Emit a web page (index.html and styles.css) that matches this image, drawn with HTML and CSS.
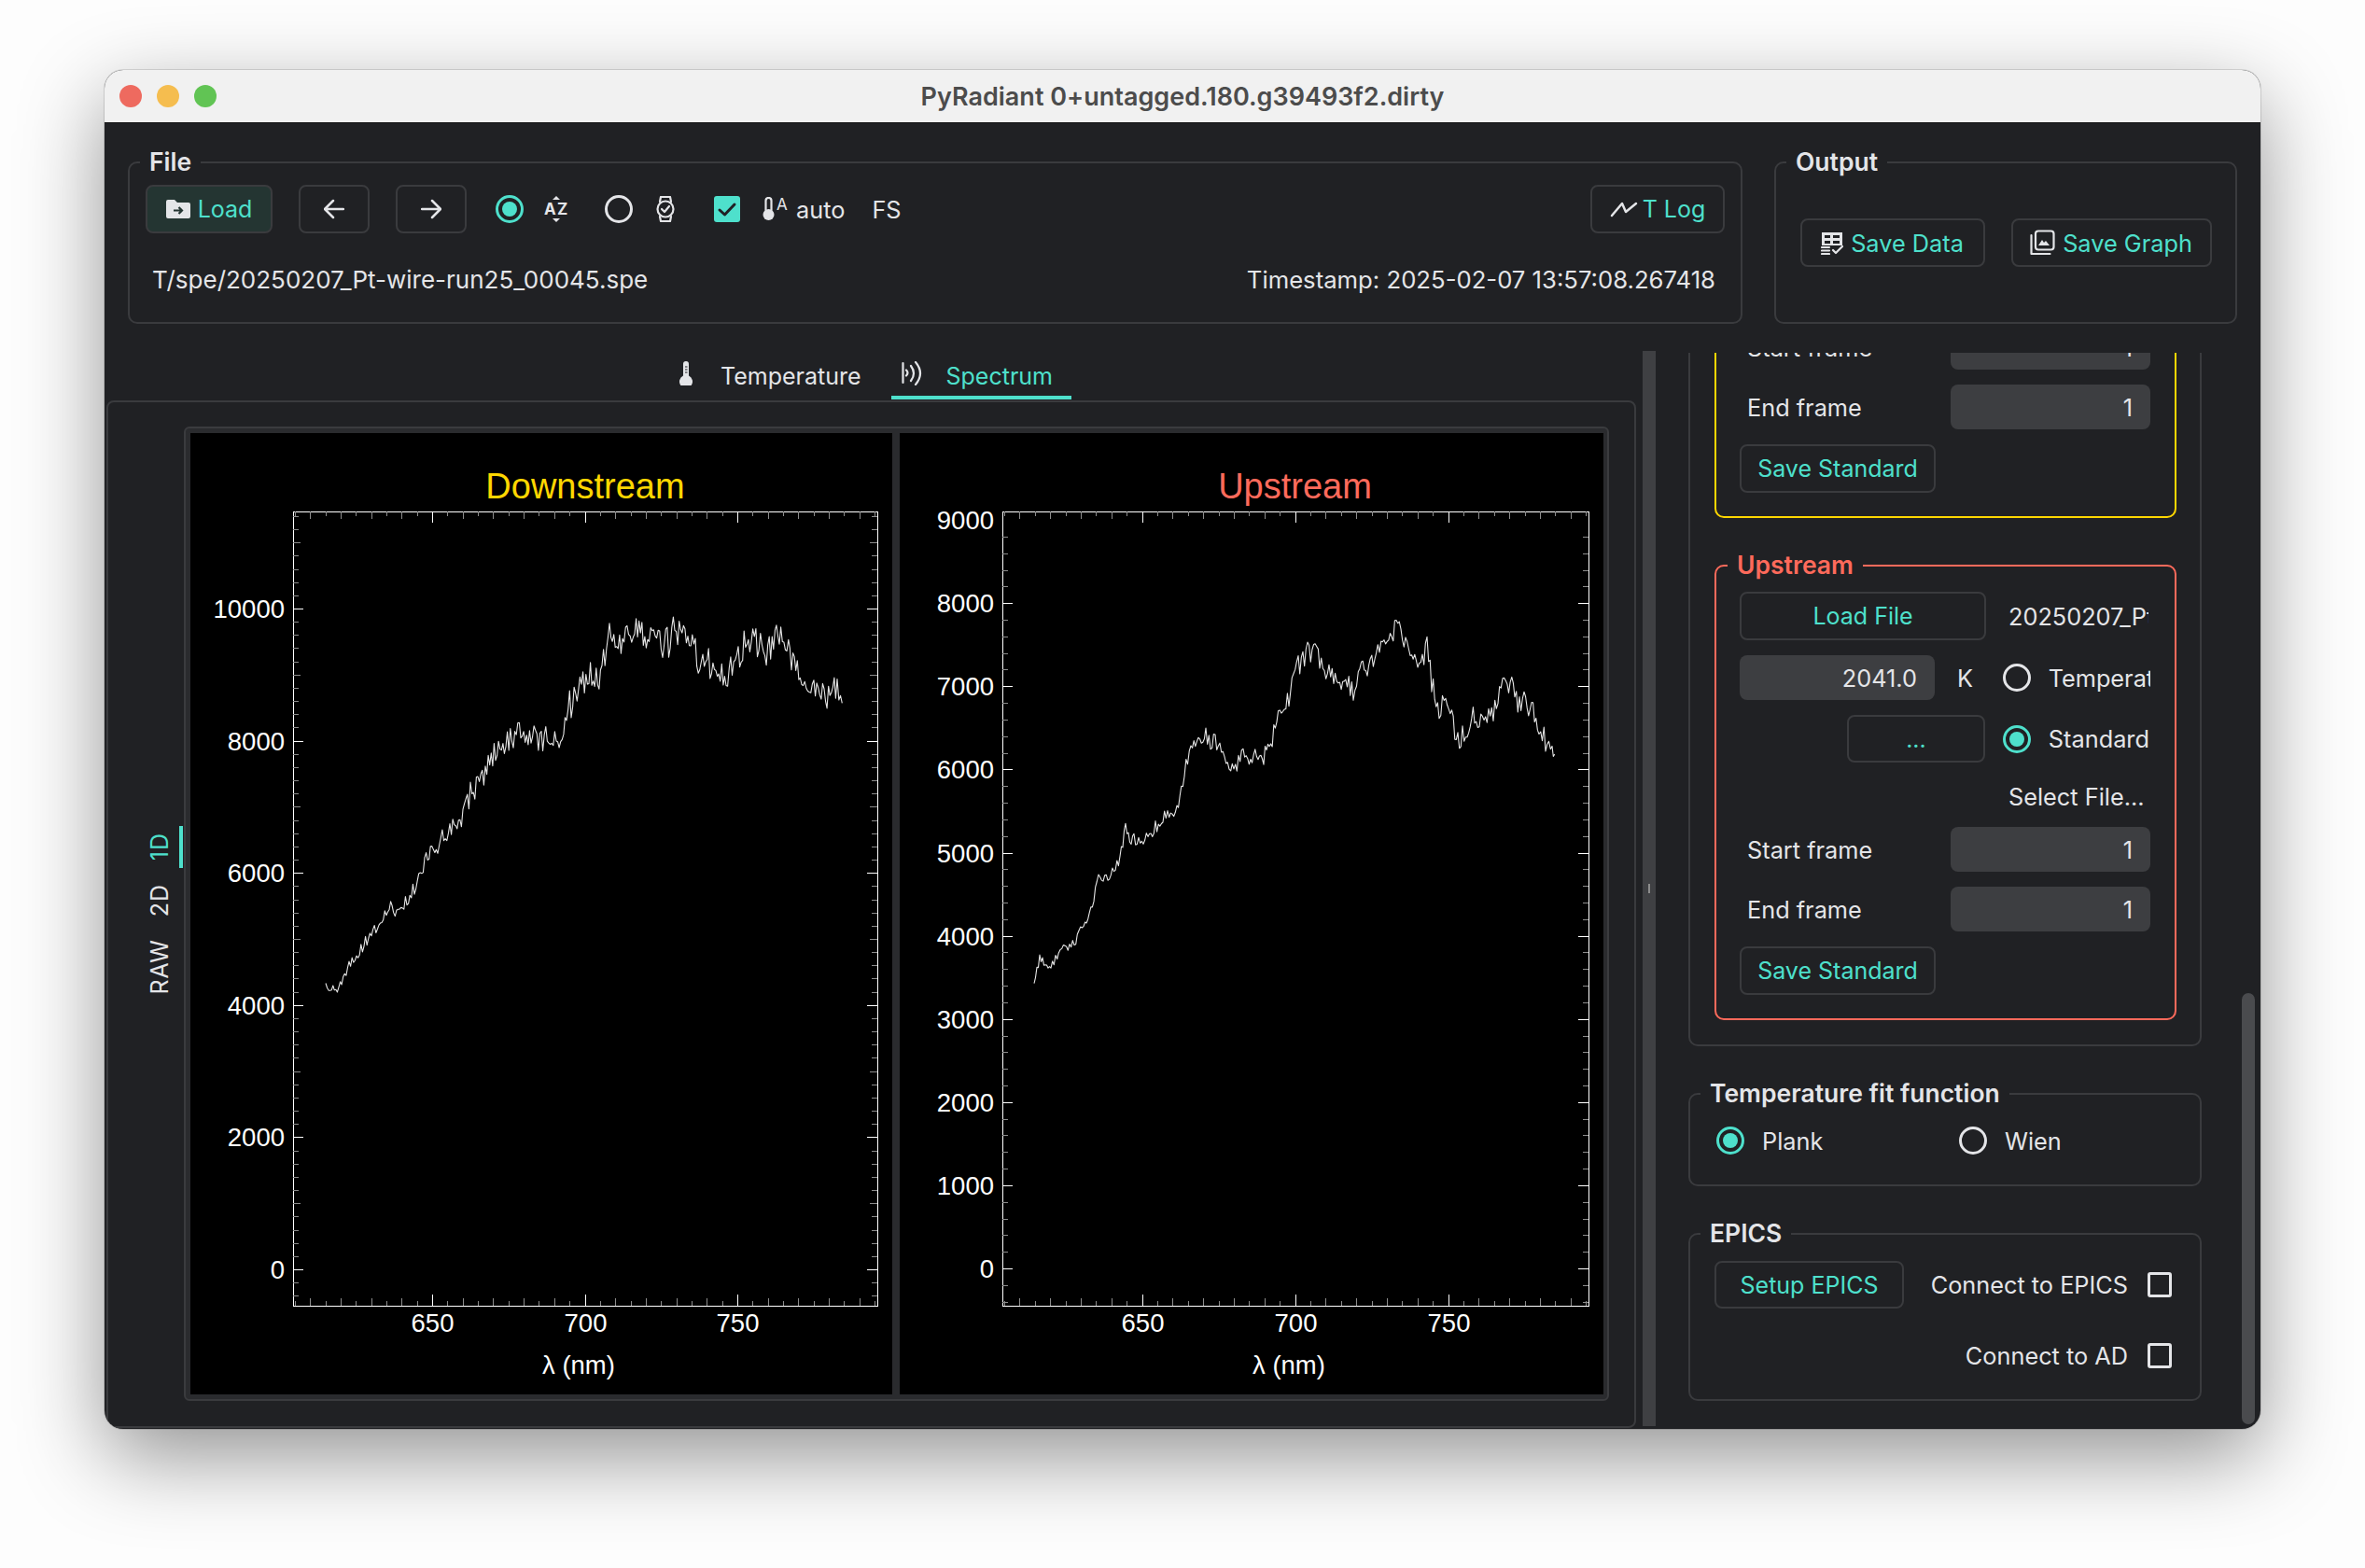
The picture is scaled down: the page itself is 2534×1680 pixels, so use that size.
FILE: index.html
```html
<!DOCTYPE html>
<html>
<head>
	<meta charset="utf-8">
	<title>PyRadiant</title>
	<link rel="stylesheet" href="styles.css">
</head>
<body>
	<div class="window">
		<div class="titlebar">
			<div class="lights">
				<span class="light red"></span>
				<span class="light yellow"></span>
				<span class="light green"></span>
			</div>
			<div class="title">PyRadiant 0+untagged.180.g39493f2.dirty</div>
		</div>

		<div class="top-row">
			<div class="group file-group">
				<span class="group-title">File</span>
				<div class="toolbar">
					<button class="btn btn-load">
						<svg class="ic-load" viewBox="0 0 26 22"><path class="fill" d="M0 3a2 2 0 0 1 2-2h7l3 3h12a2 2 0 0 1 2 2v13a2 2 0 0 1-2 2H2a2 2 0 0 1-2-2z"/><path class="arrow-dark" d="M8 12.500h9M13.500 9l3.500 3.500-3.500 3.500"/></svg>
						Load
					</button>
					<button class="btn btn-nav nav-first">
						<svg class="ic-arrow" viewBox="0 0 22 22"><path class="line" d="M21 11H2M10 2l-9 9 9 9"/></svg>
					</button>
					<button class="btn btn-nav nav-next">
						<svg class="ic-arrow" viewBox="0 0 22 22"><path class="line" d="M1 11h19M12 2l9 9-9 9"/></svg>
					</button>
					<span class="radio checked t-radio-a"></span>
					<svg class="ic-az" viewBox="0 0 28 28"><path class="fill" d="M13 0l4 4H9zM13 28l-4-4h8z"/><text class="icon-letter" x="0" y="20">A</text><text class="icon-letter" x="14" y="20">Z</text></svg>
					<span class="radio t-radio-b"></span>
					<svg class="ic-watch" viewBox="0 0 20 28"><path class="line-thin" d="M4 6l1-5h10l1 5M4 22l1 5h10l1-5"/><circle class="line-thin" cx="10" cy="14" r="8.500"/><path class="line-thin" d="M6 14l3 3 5-6"/></svg>
					<span class="check checked t-check">
						<svg viewBox="0 0 28 28"><path class="check-mark" d="M6 15l5.500 5L22 9"/></svg>
					</span>
					<svg class="ic-therm-a" viewBox="0 0 28 26"><path class="line-thin" d="M3.500 14V4a3 3 0 0 1 6 0v10"/><circle class="fill" cx="6.500" cy="19" r="6"/><text class="icon-sup" x="15" y="14">A</text></svg>
					<span class="t-auto">auto</span>
					<span class="t-fs">FS</span>
					<button class="btn btn-tlog">
						<svg class="ic-tlog" viewBox="0 0 30 17"><path class="line" d="M2 15l11-13 4 9L28 2"/></svg>
						T Log
					</button>
				</div>
				<div class="file-info">
					<span class="file-path">T/spe/20250207_Pt-wire-run25_00045.spe</span>
					<span>Timestamp: 2025-02-07 13:57:08.267418</span>
				</div>
			</div>

			<div class="group output-group">
				<span class="group-title">Output</span>
				<button class="btn btn-save">
					<svg class="ic-data" viewBox="0 0 24 25"><path class="fill" d="M1 1h22v14H1z"/><path class="cut" d="M4 4h6v3H4zM13 4h7v3h-7zM4 10h6v3H4zM13 10h7v3h-7z"/><path class="line-thin" d="M1 17h8M1 20.500h8M1 24h8M13 20l3 3 7-7"/></svg>
					Save Data
				</button>
				<button class="btn btn-save">
					<svg class="ic-graph" viewBox="0 0 27 28"><path class="line-thin" d="M1.500 6v20h20"/><rect class="line-thin" x="6" y="1.500" width="19.500" height="20" rx="3"/><path class="fill" d="M9 17l4-6 2 3 2-2 4 5z"/></svg>
					Save Graph
				</button>
			</div>
		</div>

		<div class="main-row">
			<div class="left-side">
				<div class="tabs">
					<div class="tab">
						<svg class="ic-therm" viewBox="0 0 14 26"><path class="fill" d="M4 3a3 3 0 0 1 6 0v12.500a7 7 0 1 1-6 0z"/><path class="tick-cut" d="M6 6h2.500M6 9h2.500M6 12h2.500"/></svg>
						<span>Temperature</span>
					</div>
					<div class="tab active">
						<svg class="ic-signal" viewBox="0 0 22 26"><path class="line-thin" d="M1.500 2v21"/><path class="line-thin" d="M5 9.500q3 3 0 6M10 5q6 8 0 16M15 1q10 12 0 24"/></svg>
						<span>Spectrum</span>
					</div>
				</div>
				<div class="pane">
					<div class="side-tabs">
						<div class="side-tab active"><span>1D</span></div>
						<div class="side-tab"><span>2D</span></div>
						<div class="side-tab"><span>RAW</span></div>
					</div>
					<div class="plot-frame">
						<div class="plot plot-down" id="plot-down"></div>
						<div class="plot plot-up" id="plot-up"></div>
					</div>
				</div>
			</div>

			<div class="splitter"><span></span></div>

			<div class="side-panel">
				<div class="side-content">
					<div class="group outer-group">
						<div class="source source-down">
							<span class="group-title">Downstream</span>
							<div class="src-row">
								<button class="btn btn-file">Load File</button>
								<span class="file-name">20250207_Pt-wire-run25_00001.spe</span>
							</div>
							<div class="src-row row-temp">
								<div class="num num-temp">2041.0</div>
								<span class="unit">K</span>
								<span class="radio"></span>
								<span class="clip">Temperature</span>
							</div>
							<div class="src-row row-std">
								<button class="btn btn-dots">...</button>
								<span class="radio checked"></span>
								<span class="clip">Standard</span>
							</div>
							<div class="src-row row-select">Select File...</div>
							<div class="src-row row-frame">
								<span>Start frame</span>
								<div class="num num-frame">1</div>
							</div>
							<div class="src-row row-frame">
								<span>End frame</span>
								<div class="num num-frame">1</div>
							</div>
							<div class="src-row row-save">
								<button class="btn btn-standard">Save Standard</button>
							</div>
						</div>

						<div class="source source-up">
							<span class="group-title">Upstream</span>
							<div class="src-row">
								<button class="btn btn-file">Load File</button>
								<span class="file-name">20250207_Pt-wire-run25_00001.spe</span>
							</div>
							<div class="src-row row-temp">
								<div class="num num-temp">2041.0</div>
								<span class="unit">K</span>
								<span class="radio"></span>
								<span class="clip">Temperature</span>
							</div>
							<div class="src-row row-std">
								<button class="btn btn-dots">...</button>
								<span class="radio checked"></span>
								<span class="clip">Standard</span>
							</div>
							<div class="src-row row-select">Select File...</div>
							<div class="src-row row-frame">
								<span>Start frame</span>
								<div class="num num-frame">1</div>
							</div>
							<div class="src-row row-frame">
								<span>End frame</span>
								<div class="num num-frame">1</div>
							</div>
							<div class="src-row row-save">
								<button class="btn btn-standard">Save Standard</button>
							</div>
						</div>
					</div>

					<div class="group fit-group">
						<span class="group-title">Temperature fit function</span>
						<label class="fit-option"><span class="radio checked"></span>Plank</label>
						<label class="fit-option"><span class="radio"></span>Wien</label>
					</div>

					<div class="group epics-group">
						<span class="group-title">EPICS</span>
						<div class="epics-row">
							<button class="btn btn-epics">Setup EPICS</button>
							<span class="epics-check">Connect to EPICS<span class="check"></span></span>
						</div>
						<div class="epics-row epics-row-end">
							<span class="epics-check">Connect to AD<span class="check"></span></span>
						</div>
					</div>
				</div>
				<div class="scrollbar"></div>
			</div>
		</div>
	</div>

	<script src="plot.js"></script>
</body>
</html>
```

FILE: styles.css
```css
* {
	box-sizing: border-box;
}

body {
	margin: 0;
	width: 2534px;
	height: 1680px;
	padding: 75px 0 0 112px;
	background-color: #fdfdfd;
	font-family: Inter, "Noto Sans", sans-serif;
	font-size: 25.300px;
	color: #e4e5e8;
	overflow: hidden;
}

.window {
	width: 2310px;
	height: 1456px;
	display: flex;
	flex-direction: column;
	background-color: #202124;
	border-radius: 20px;
	overflow: hidden;
	box-shadow: 0 30px 90px rgba(0, 0, 0, 0.42), 0 0 0 1px rgba(0, 0, 0, 0.12);
}

/* title bar */
.titlebar {
	height: 57px;
	flex: none;
	display: grid;
	grid-template-columns: 1fr auto 1fr;
	align-items: center;
	background-color: #f1f1f1;
	border-bottom: 1px solid #111;
}

.lights {
	display: flex;
	gap: 16px;
	padding-left: 16px;
}

.light {
	width: 24px;
	height: 24px;
	border-radius: 50%;
}

.red { background-color: #ee6a5f; }
.yellow { background-color: #f5bd4f; }
.green { background-color: #61c454; }

.title {
	font-size: 27px;
	font-weight: 600;
	color: #4c4c4c;
}

/* groups */
.group,
.source {
	position: relative;
	border: 2px solid #3a3b3e;
	border-radius: 10px;
}

.group-title {
	position: absolute;
	top: -18px;
	left: 11px;
	padding: 0 10px;
	line-height: 32px;
	font-size: 26.500px;
	font-weight: 600;
	white-space: nowrap;
	background-color: #202124;
}

.top-row {
	flex: none;
	height: 174px;
	margin: 41px 25px 0;
	display: flex;
	gap: 34px;
}

.file-group {
	flex: 1;
	padding: 23px 17px 0;
}

.output-group {
	width: 496px;
	display: flex;
	justify-content: center;
	align-items: center;
	gap: 28px;
}

/* buttons */
.btn {
	height: 52px;
	display: inline-flex;
	justify-content: center;
	align-items: center;
	padding: 0;
	border: 2px solid #3a3b3e;
	border-radius: 8px;
	background: none;
	color: #4ee0cc;
	font-family: inherit;
	font-size: 25px;
	white-space: nowrap;
}

.btn-load {
	width: 136px;
	gap: 8px;
	background-color: #243532;
}

.btn-nav {
	width: 76px;
}

.nav-first { margin-left: 28px; }
.nav-next { margin-left: 28px; }

.btn-tlog {
	width: 144px;
	gap: 5px;
	margin-left: auto;
}

.btn-save {
	gap: 8px;
	font-size: 25.300px;
}

.output-group .btn-save:nth-of-type(1) { width: 198px; }
.output-group .btn-save:nth-of-type(2) { width: 215px; }

.btn-file { width: 264px; }
.btn-dots { width: 149px; height: 51px; margin-left: 115px; }
.btn-standard { width: 210px; }
.btn-epics { width: 203px; height: 51px; }

/* radios and checks */
.radio {
	width: 30px;
	height: 30px;
	flex: none;
	display: flex;
	justify-content: center;
	align-items: center;
	border: 3px solid #e4e5e8;
	border-radius: 50%;
}

.radio.checked {
	border-color: #4ee0cc;
}

.radio.checked::after {
	content: "";
	width: 16px;
	height: 16px;
	border-radius: 50%;
	background-color: #4ee0cc;
}

.check {
	width: 26px;
	height: 27px;
	flex: none;
	display: block;
	border: 3px solid #e4e5e8;
	border-radius: 3px;
}

.check.checked {
	width: 28px;
	height: 28px;
	border: none;
	background-color: #4ee0cc;
}

.check svg {
	display: block;
}

/* icons */
.fill { fill: #e4e5e8; }
.cut { fill: #202124; }
.line { fill: none; stroke: #e4e5e8; stroke-width: 2.500; stroke-linecap: round; stroke-linejoin: round; }
.line-thin { fill: none; stroke: #e4e5e8; stroke-width: 2.200; stroke-linecap: round; stroke-linejoin: round; }
.arrow-dark { fill: none; stroke: #243532; stroke-width: 2.200; }
.tick-cut { fill: none; stroke: #202124; stroke-width: 1.200; }
.check-mark { fill: none; stroke: #202124; stroke-width: 3; stroke-linecap: round; stroke-linejoin: round; }
.icon-letter { fill: #e4e5e8; font-size: 17px; font-weight: 700; font-family: Inter, sans-serif; }
.icon-sup { fill: #e4e5e8; font-size: 17px; font-family: Inter, sans-serif; }

.ic-load { width: 26px; height: 22px; }
.ic-arrow { width: 22px; height: 22px; }
.ic-az { width: 28px; height: 28px; margin-left: 22px; flex: none; }
.ic-watch { width: 20px; height: 28px; margin-left: 25px; flex: none; }
.ic-therm-a { width: 28px; height: 26px; margin-left: 24px; flex: none; }
.ic-tlog { width: 30px; height: 17px; }
.ic-data { width: 24px; height: 25px; }
.ic-graph { width: 27px; height: 28px; }
.ic-therm { width: 14px; height: 26px; margin-top: -6px; }
.ic-signal { width: 22px; height: 26px; margin-top: -6px; }

/* file group */
.toolbar {
	height: 52px;
	display: flex;
	align-items: center;
}

.t-radio-a { margin-left: 31px; }
.t-radio-b { margin-left: 37px; }
.t-check { margin-left: 42px; }
.t-auto { margin-left: 8px; }
.t-fs { margin-left: 29px; }

.file-info {
	height: 32px;
	margin-top: 33px;
	padding: 0 10px 0 7px;
	display: flex;
	justify-content: space-between;
	align-items: center;
	font-size: 25.700px;
}

.file-path {
	font-size: 26px;
}

/* main area */
.main-row {
	flex: 1;
	min-height: 0;
	display: flex;
}

.left-side {
	width: 1648px;
	display: flex;
	flex-direction: column;
	padding: 26px 7px 1px 2px;
}

.tabs {
	height: 55px;
	flex: none;
	display: flex;
	justify-content: center;
	align-items: flex-end;
	gap: 12px;
	margin-bottom: 1px;
	padding-right: 6px;
	font-size: 25px;
}

.tab {
	height: 55px;
	display: flex;
	align-items: center;
	padding: 9px 20px 0 11px;
	gap: 26px;
	border-bottom: 4px solid transparent;
}

.tab:first-child {
	padding-left: 15px;
	gap: 30px;
}

.tab.active {
	color: #4ee0cc;
	border-bottom-color: #4ee0cc;
}

.pane {
	flex: 1;
	min-height: 0;
	display: flex;
	padding: 26px 27px 27px 0;
	border: 2px solid #3a3b3e;
	border-radius: 8px;
}

.side-tabs {
	width: 81px;
	flex: none;
	display: flex;
	flex-direction: column;
	justify-content: center;
	align-items: flex-end;
	gap: 10px;
	padding-right: 1px;
}

.side-tab {
	padding: 7px 5px 7px 0;
	border-right: 4px solid transparent;
	line-height: 32px;
	font-size: 25px;
	letter-spacing: 1px;
}

.side-tab span {
	display: block;
	writing-mode: vertical-rl;
	transform: rotate(180deg);
}

.side-tab.active {
	color: #4ee0cc;
	border-right-color: #4ee0cc;
}

.plot-frame {
	flex: 1;
	display: flex;
	gap: 8px;
	padding: 5px 4px 5px 5px;
	border: 2px solid #3a3b3e;
	border-radius: 6px;
	background-color: #2a2b2e;
}

.plot {
	background-color: #000;
}

.plot-down { width: 752px; }
.plot-up { width: 754px; }

.plot svg {
	display: block;
	width: 100%;
	height: 100%;
}

.plot text {
	font-family: "Liberation Sans", Arial, sans-serif;
	font-size: 27.500px;
	fill: #fff;
}

.plot .plot-title { font-size: 38px; }
.plot-down .plot-title { fill: #ffd700; }
.plot-up .plot-title { fill: #ff6a5b; }

.axis-box { fill: none; stroke: #fff; stroke-width: 1; }
.tick-major { stroke: #fff; stroke-width: 1; }
.tick-minor { stroke: #8c8c8c; stroke-width: 1; }
.trace { fill: none; stroke: #e6e6e6; stroke-width: 1.100; stroke-linejoin: round; }

/* splitter and right panel */
.splitter {
	width: 14px;
	flex: none;
	margin: 29px 0 3px;
	display: flex;
	justify-content: center;
	align-items: center;
	background-color: #3f4043;
}

.splitter span {
	width: 2px;
	height: 10px;
	background-color: #8c8c8c;
}

.side-panel {
	flex: 1;
	position: relative;
	margin-top: 31px;
	overflow: hidden;
}

.side-content {
	width: 585px;
	margin-top: -348px;
	padding-left: 35px;
	display: flex;
	flex-direction: column;
	gap: 50px;
}

.outer-group {
	height: 1091px;
	padding: 35px 0 0 26px;
	display: flex;
	flex-direction: column;
	gap: 50px;
}

.source {
	width: 495px;
	height: 488px;
	padding: 27px 26px 0 25px;
}

.source-down { border-color: #ffd700; }
.source-up { border-color: #ff6a5b; }
.source-down .group-title { color: #ffd700; left: 12px; }
.source-up .group-title { color: #ff6a5b; left: 12px; }

.src-row {
	display: flex;
	align-items: center;
}

.file-name {
	width: 150px;
	margin-left: 24px;
	overflow: hidden;
	white-space: nowrap;
}

.row-temp { margin-top: 16px; }
.row-std { margin-top: 16px; }

.num {
	height: 48px;
	display: flex;
	justify-content: flex-end;
	align-items: center;
	padding-right: 19px;
	border-radius: 8px;
	background-color: #3d3e41;
}

.num-temp { width: 210px; }
.num-frame { width: 214px; }

.unit {
	width: 49px;
	margin-left: 24px;
}

.row-std .radio { margin-left: 19px; }

.clip {
	width: 110px;
	margin-left: 19px;
	overflow: hidden;
	white-space: nowrap;
}

.row-select {
	height: 32px;
	margin-top: 20px;
	padding-left: 288px;
	white-space: nowrap;
}

.row-frame {
	justify-content: space-between;
	margin-top: 16px;
	padding-left: 8px;
}

.row-select + .row-frame { margin-top: 17px; }
.row-save { margin-top: 16px; }

.fit-group {
	height: 100px;
	padding: 32px 0 0 28px;
	display: grid;
	grid-template-columns: 260px 1fr;
	align-items: start;
}

.fit-option {
	height: 34px;
	display: flex;
	align-items: center;
	gap: 19px;
}

.epics-group {
	height: 180px;
	padding: 28px 30px 0 26px;
}

.epics-row {
	display: flex;
	justify-content: space-between;
	align-items: center;
}

.epics-row-end {
	justify-content: flex-end;
	height: 32px;
	margin-top: 34px;
}

.epics-check {
	display: flex;
	align-items: center;
	gap: 21px;
}

.scrollbar {
	position: absolute;
	top: 686px;
	right: 6px;
	bottom: 5px;
	width: 14px;
	border-radius: 7px;
	background-color: #4a4b4e;
}
```

FILE: plot.js
```js
// spectrum plots, coordinates are pixels inside each black plot box

const plots = [
	{
		id: 'plot-down',
		title: 'Downstream',
		titleX: 423,
		labelX: 416,
		box: [110, 84, 736, 935],
		xZero: 422.5,
		xScale: 163.4 / 50,
		yZero: 896,
		yScale: 141.6 / 2000,
		yStart: -400,
		yEnd: 11400,
		yMajor: 2000,
		yMedium: 1000,
		yLabelMax: 10000,
		seed: 7919,
		noise: 24,
		trace: [[145, 593], [159, 595], [170, 571], [186, 547], [202, 528], [213, 508], [224, 514], [240, 488], [251, 460], [265, 441], [278, 417], [292, 413], [300, 385], [316, 362], [327, 342], [338, 330], [354, 322], [376, 326], [392, 326], [403, 310], [408, 290], [419, 271], [427, 259], [441, 261], [449, 219], [463, 223], [476, 211], [490, 219], [506, 227], [519, 207], [533, 227], [549, 239], [563, 255], [574, 259], [587, 243], [601, 225], [614, 225], [631, 219], [644, 239], [655, 263], [668, 267], [679, 281], [693, 275], [700, 290]]
	},
	{
		id: 'plot-up',
		title: 'Upstream',
		titleX: 423.5,
		labelX: 417,
		box: [110, 84, 738, 935],
		xZero: 423.5,
		xScale: 164 / 50,
		yZero: 895,
		yScale: 89.1 / 1000,
		yStart: -400,
		yEnd: 8800,
		yMajor: 1000,
		yMedium: 0,
		yLabels: [9000],
		seed: 104729,
		noise: 18,
		trace: [[144, 587], [150, 563], [162, 571], [172, 553], [187, 547], [197, 528], [208, 500], [213, 476], [223, 476], [236, 456], [242, 425], [251, 437], [266, 437], [282, 409], [297, 401], [305, 362], [312, 342], [328, 330], [343, 334], [353, 358], [368, 350], [384, 350], [396, 342], [404, 306], [417, 286], [422, 259], [437, 231], [450, 239], [465, 267], [486, 275], [493, 251], [509, 247], [519, 219], [532, 207], [547, 227], [555, 251], [565, 231], [570, 267], [578, 294], [585, 286], [598, 326], [608, 326], [616, 298], [626, 318], [636, 290], [646, 267], [659, 275], [669, 290], [677, 294], [685, 310], [692, 334], [699, 326], [703, 352]]
	}
];

function tick(x1, y1, x2, y2, cls) {
	return `<line class="${cls}" x1="${x1}" y1="${y1}" x2="${x2}" y2="${y2}"/>`;
}

function label(x, y, anchor, text, cls) {
	return `<text class="${cls || ''}" x="${x}" y="${y}" text-anchor="${anchor}" dominant-baseline="central">${text}</text>`;
}

function xTicks(p) {
	const [left, top, right, bottom] = p.box;
	let out = '';
	for (let nm = 605; nm <= 795; nm += 5) {
		const x = Math.round(p.xZero + (nm - 700) * p.xScale) + 0.5;
		const major = nm % 50 === 0;
		const len = major ? 12 : (nm % 10 === 0 ? 8 : 5);
		const cls = major ? 'tick-major' : 'tick-minor';
		out += tick(x, top, x, top + len, cls) + tick(x, bottom - len, x, bottom, cls);
		if (major) out += label(x, 953, 'middle', nm);
	}
	return out;
}

function yTicks(p) {
	const [left, top, right, bottom] = p.box;
	let out = '';
	for (let v = p.yStart; v <= p.yEnd; v += 200) {
		const y = Math.round(p.yZero - v * p.yScale) + 0.5;
		const major = v % p.yMajor === 0;
		const medium = p.yMedium && v % p.yMedium === 0;
		const len = major ? 11 : (medium ? 8 : 6);
		const cls = major ? 'tick-major' : 'tick-minor';
		out += tick(left, y, left + len, y, cls) + tick(right - len, y, right, y, cls);
		if (major && v >= 0 && v <= 10000) out += label(left - 9, y, 'end', v);
	}
	// labels with no tick of their own
	(p.yLabels || []).forEach(function(v) {
		out += label(left - 9, Math.round(p.yZero - v * p.yScale), 'end', v);
	});
	return out;
}

// noisy line through the hand read points
function traceLine(p) {
	let seed = p.seed;
	const rnd = () => {
		seed = (seed * 16807) % 2147483647;
		return seed / 2147483647;
	};
	const pts = p.trace;
	const out = [];
	for (let i = 0; i < pts.length - 1; i++) {
		const [x0, y0] = pts[i];
		const [x1, y1] = pts[i + 1];
		const steps = Math.max(2, Math.round((x1 - x0) / 1.6));
		for (let s = 0; s < steps; s++) {
			const t = s / steps;
			const x = x0 + (x1 - x0) * t;
			const grow = Math.min(1, (x - pts[0][0]) / 250);
			let n = (rnd() - 0.5) * (8 + p.noise * grow);
			if (rnd() < 0.12) n += (rnd() - 0.4) * 1.2 * p.noise * grow;
			out.push(x.toFixed(1) + ',' + (y0 + (y1 - y0) * t + n).toFixed(1));
		}
	}
	return `<polyline class="trace" points="${out.join(' ')}"/>`;
}

plots.forEach(function(p) {
	const el = document.getElementById(p.id);
	const [left, top, right, bottom] = p.box;
	el.innerHTML = `<svg viewBox="0 0 ${el.clientWidth} ${el.clientHeight}">
		<rect class="axis-box" x="${left + 0.5}" y="${top + 0.5}" width="${right - left}" height="${bottom - top}"/>
		${xTicks(p)}${yTicks(p)}${traceLine(p)}
		${label(p.titleX, 57, 'middle', p.title, 'plot-title')}
		${label(p.labelX, 998, 'middle', 'λ (nm)')}
	</svg>`;
});
```
